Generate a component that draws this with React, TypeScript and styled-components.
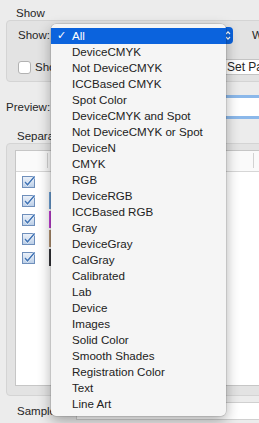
import React from "react";
import styled, { createGlobalStyle } from "styled-components";

const Global = createGlobalStyle`
  html, body { margin: 0; padding: 0; background: #ececec; }
  body { font-family: "Liberation Sans", Arial, sans-serif; }
  * { box-sizing: border-box; }
`;

const Window = styled.div`
  position: relative;
  width: 259px;
  height: 423px;
  overflow: hidden;
  background: #ececec;
  color: #262626;
  font-size: 11.5px;
  padding-left: 6px;
  display: flex;
  flex-direction: column;
`;

const SectionTitle = styled.div<{ $top: number; $h: number; $indent: number }>`
  margin-top: ${(p) => p.$top}px;
  height: ${(p) => p.$h}px;
  line-height: ${(p) => p.$h}px;
  padding-left: ${(p) => p.$indent}px;
  white-space: nowrap;
`;

const GroupBox = styled.div<{ $h: number }>`
  width: 290px;
  height: ${(p) => p.$h}px;
  flex: none;
  background: #e3e3e3;
  border: 1px solid #d4d4d4;
  border-radius: 4px;
  display: flex;
  flex-direction: column;
`;

const Row = styled.div<{ $top: number; $h: number }>`
  display: flex;
  align-items: center;
  margin-top: ${(p) => p.$top}px;
  height: ${(p) => p.$h}px;
  flex: none;
  white-space: nowrap;
`;

const Label = styled.span<{ $w: number; $pad?: number }>`
  width: ${(p) => p.$w}px;
  padding-left: ${(p) => p.$pad ?? 0}px;
  flex: none;
`;

const PopupButton = styled.div`
  position: relative;
  width: 182px;
  height: 17px;
  flex: none;
  border-radius: 4px;
  background: #0b63dd;
  display: flex;
  justify-content: flex-end;
  align-items: center;
  padding-right: 2px;
`;

const Checkbox = styled.span`
  width: 13px;
  height: 13px;
  flex: none;
  background: #fff;
  border: 1px solid #b2b2b2;
  border-radius: 3px;
  margin-left: 11px;
  margin-right: 4px;
`;

const PushButton = styled.div`
  margin-left: 32px;
  height: 16px;
  width: 120px;
  flex: none;
  background: #fff;
  border: 1px solid #c4c4c4;
  border-radius: 3px;
  padding-left: 9px;
  line-height: 14px;
  font-size: 12px;
`;

const FocusField = styled.div`
  margin-left: 8px;
  width: 260px;
  height: 24px;
  flex: none;
  border: 3px solid #8bb8ea;
  border-radius: 4px;
  background: #fff;
`;

const ListBox = styled.div`
  margin: 6px 0 0 8px;
  height: 236px;
  width: 270px;
  flex: none;
  background: #fff;
  border: 1px solid #c6c6c6;
  display: flex;
  flex-direction: column;
`;

const ListHeader = styled.div`
  height: 21px;
  flex: none;
  border-bottom: 1px solid #d6d6d6;
  background: #fafafa;
  display: flex;
`;

const HeaderCell = styled.div<{ $w: number }>`
  width: ${(p) => p.$w}px;
  flex: none;
  margin: 2px 0 3px;
  border-right: 1px solid #d2d2d2;
`;

const ListRow = styled.div`
  height: 19px;
  flex: none;
  display: flex;
  align-items: center;
`;

const CheckCell = styled.div`
  width: 33px;
  padding-left: 6px;
  flex: none;
  display: flex;
  align-items: center;
`;

const Swatch = styled.div<{ $c: string }>`
  width: 14px;
  height: 17px;
  flex: none;
  background: ${(p) => p.$c};
`;

const SampleField = styled.div`
  margin-left: 20px;
  width: 260px;
  height: 18px;
  flex: none;
  background: #fff;
  border: 1px solid #d0d0d0;
`;

const Menu = styled.div`
  position: absolute;
  left: 51px;
  top: 24px;
  width: 175px;
  padding: 4px 0;
  background: #f5f5f5;
  border-radius: 5px;
  box-shadow: 0 0 0 0.5px rgba(0, 0, 0, 0.18), 0 5px 14px rgba(0, 0, 0, 0.32);
  font-size: 11.6px;
  color: #222;
`;

const MenuItem = styled.div<{ $sel?: boolean }>`
  height: 16px;
  line-height: 16px;
  display: flex;
  white-space: nowrap;
  background: ${(p) => (p.$sel ? "#0b63dd" : "transparent")};
  color: ${(p) => (p.$sel ? "#fff" : "#222")};
`;

const Mark = styled.span`
  width: 21px;
  padding-left: 6px;
  flex: none;
  font-size: 11px;
  font-family: "DejaVu Sans", sans-serif;
`;

const items = [
  "All",
  "DeviceCMYK",
  "Not DeviceCMYK",
  "ICCBased CMYK",
  "Spot Color",
  "DeviceCMYK and Spot",
  "Not DeviceCMYK or Spot",
  "DeviceN",
  "CMYK",
  "RGB",
  "DeviceRGB",
  "ICCBased RGB",
  "Gray",
  "DeviceGray",
  "CalGray",
  "Calibrated",
  "Lab",
  "Device",
  "Images",
  "Solid Color",
  "Smooth Shades",
  "Registration Color",
  "Text",
  "Line Art",
];

const swatches = ["#ffffff", "#6c9fd4", "#c03fd4", "#b39372", "#36363a"];

function Chevrons() {
  return (
    <svg width="6" height="11" viewBox="0 0 6 11">
      <path d="M1 4 L3 1.8 L5 4" fill="none" stroke="#fff" strokeWidth="1.2" />
      <path d="M1 7 L3 9.2 L5 7" fill="none" stroke="#fff" strokeWidth="1.2" />
    </svg>
  );
}

function OldCheck() {
  return (
    <svg width="14" height="13" viewBox="0 0 14 13">
      <defs>
        <linearGradient id="cbg" x1="0" y1="0" x2="0" y2="1">
          <stop offset="0" stopColor="#eef3fa" />
          <stop offset="1" stopColor="#b9cde6" />
        </linearGradient>
      </defs>
      <rect x="0.5" y="1.5" width="12" height="11" fill="url(#cbg)" stroke="#6f8fbb" />
      <path d="M3 7 L5.5 9.8 L12.5 1.5" fill="none" stroke="#fff" strokeWidth="2.6" />
      <path d="M3 7 L5.5 9.8 L12.5 1.5" fill="none" stroke="#3f73b5" strokeWidth="1.5" />
    </svg>
  );
}

export default function App() {
  return (
    <>
      <Global />
      <Window>
        <SectionTitle $top={6} $h={14} $indent={10}>Show</SectionTitle>
        <GroupBox $h={62}>
          <Row $top={5} $h={18}>
            <Label $w={44} $pad={11}>Show:</Label>
            <PopupButton>
              <Chevrons />
            </PopupButton>
            <Label $w={40} $pad={19}>With</Label>
          </Row>
          <Row $top={15} $h={16}>
            <Checkbox />
            <Label $w={150}>Show</Label>
            <PushButton>Set Page Range...</PushButton>
          </Row>
        </GroupBox>
        <Row $top={13} $h={24}>
          <Label $w={46}>Preview:</Label>
          <FocusField />
        </Row>
        <SectionTitle $top={11} $h={13} $indent={11}>Separations</SectionTitle>
        <GroupBox $h={253}>
          <ListBox>
            <ListHeader>
              <HeaderCell $w={32} />
              <HeaderCell $w={206} />
            </ListHeader>
            {swatches.map((c, i) => (
              <ListRow key={i}>
                <CheckCell>
                  <OldCheck />
                </CheckCell>
                <Swatch $c={c} />
              </ListRow>
            ))}
          </ListBox>
        </GroupBox>
        <Row $top={6} $h={18}>
          <Label $w={50} $pad={11}>Sample</Label>
          <SampleField />
        </Row>
        <Menu>
          {items.map((t, i) => (
            <MenuItem key={t} $sel={i === 0}>
              <Mark>{i === 0 ? "✓" : ""}</Mark>
              {t}
            </MenuItem>
          ))}
        </Menu>
      </Window>
    </>
  );
}
